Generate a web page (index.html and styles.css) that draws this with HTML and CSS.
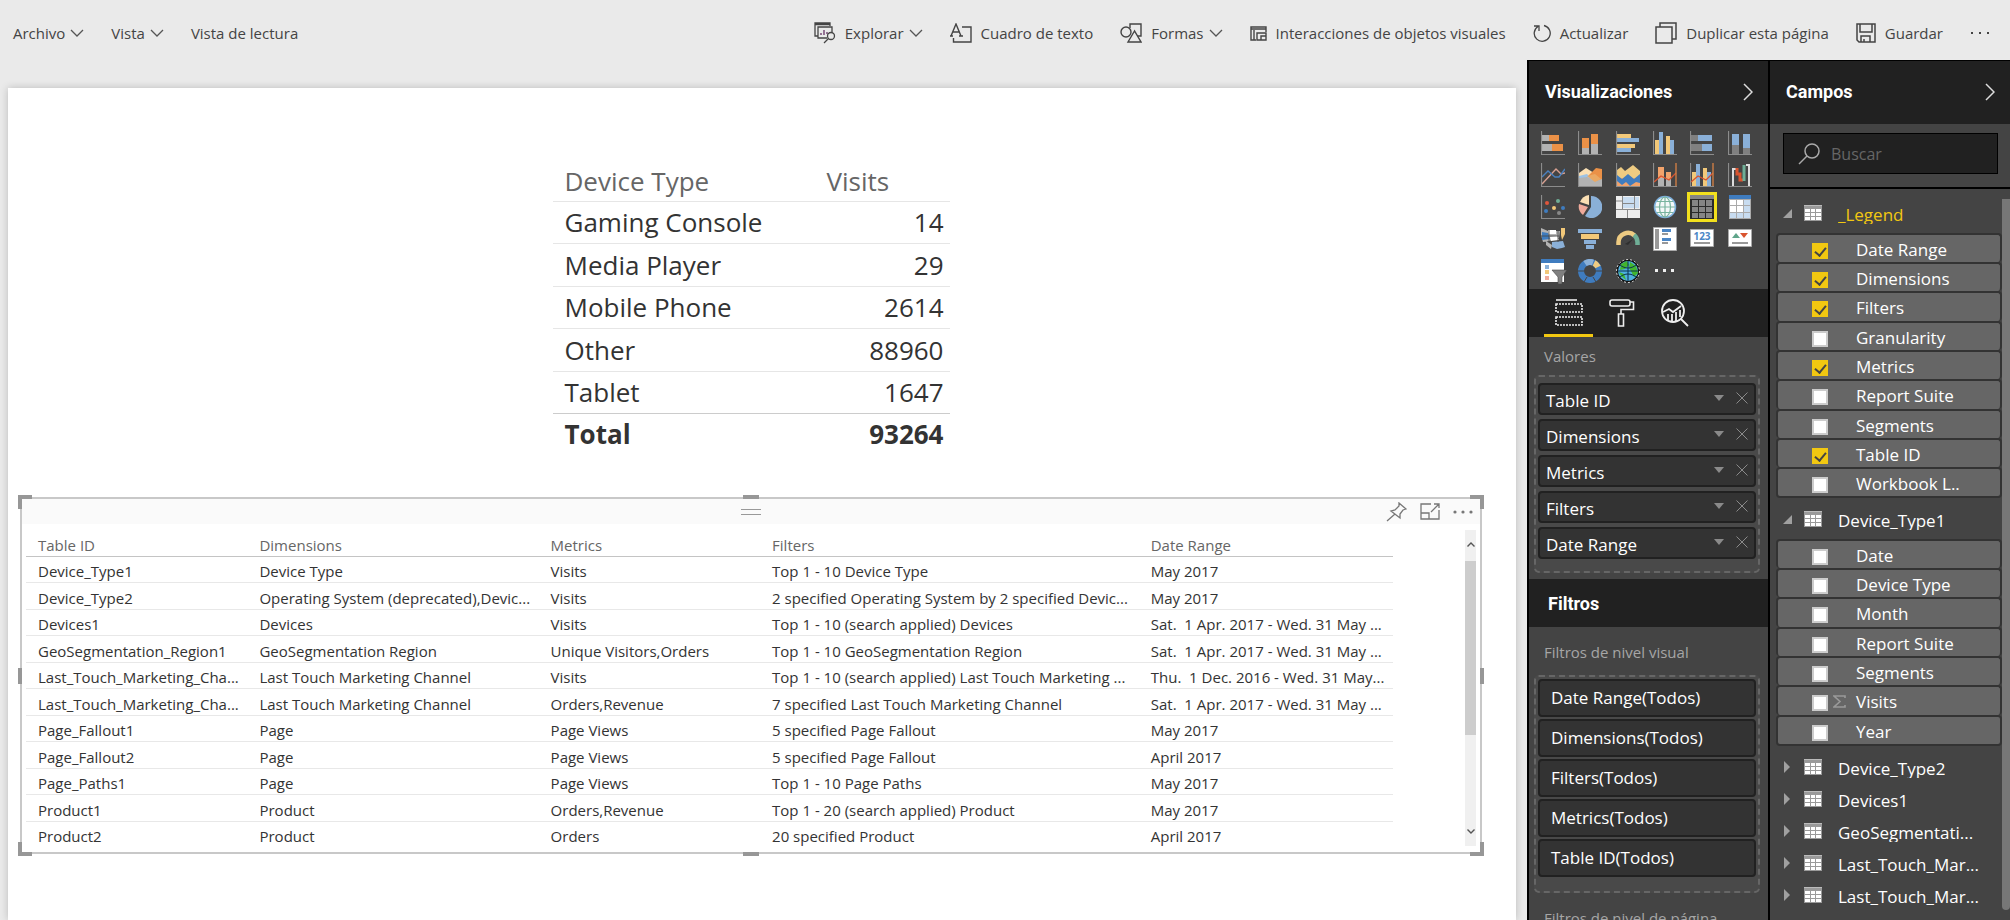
FILE: index.html
```html
<!DOCTYPE html>
<html lang="es">
<head>
<meta charset="utf-8">
<title>Informe</title>
<link rel="stylesheet" href="styles.css">
</head>
<body>
<svg class="defs" aria-hidden="true">
  <symbol id="chev" viewBox="0 0 14 8"><path d="M1 1l6 6 6-6" fill="none" stroke="#555" stroke-width="1.3"/></symbol>
  <symbol id="chevr" viewBox="0 0 10 18"><path d="M1 1l8 8-8 8" fill="none" stroke="#ddd" stroke-width="1.5"/></symbol>
  <symbol id="tri" viewBox="0 0 10 6"><path d="M0 0h10L5 6z" fill="#8a8a8a"/></symbol>
  <symbol id="x" viewBox="0 0 12 12"><path d="M.5.5l11 11M11.500.5l-11 11" stroke="#8a8a8a" stroke-width="1" fill="none"/></symbol>
  <symbol id="open" viewBox="0 0 9 9"><path d="M9 0v9H0z" fill="#a0a0a0"/></symbol>
  <symbol id="closed" viewBox="0 0 9 12"><path d="M1 0l6 6-6 6z" fill="#a0a0a0"/></symbol>
  <symbol id="tbl" viewBox="0 0 18 16"><path fill="#9a9a9a" d="M0 0h18v16H0z"/><path fill="#bbb" d="M0 0h18v1H0z"/><path fill="#fff" d="M1 4h5v3H1zM7 4h4v3H7zM12 4h5v3h-5zM1 8h5v3H1zM7 8h4v3H7zM12 8h5v3h-5zM1 12h5v3H1zM7 12h4v3H7zM12 12h5v3h-5z"/></symbol>
  <symbol id="axis" viewBox="0 0 24 24"><path d="M.5 0v23.500H24" fill="none" stroke="#8c8c8c" stroke-width="1.200"/></symbol>
</svg>

<header class="toolbar">
  <nav class="group left">
    <button>Archivo <svg class="chev"><use href="#chev"/></svg></button>
    <button>Vista <svg class="chev"><use href="#chev"/></svg></button>
    <button>Vista de lectura</button>
  </nav>
  <div class="group right">
    <button><svg class="tool" width="22" height="22" viewBox="0 0 22 22" fill="none" stroke="#444" stroke-width="1.300"><path d="M4 14H1V1h15v3M1 2.500h15M13 16H4V5h14v5"/><path d="M7 13v-2M10 13V8M13 12v-2" stroke="#636"/><circle cx="17" cy="14" r="3.500"/><path d="M14.500 16.500L10 21"/></svg>Explorar <svg class="chev"><use href="#chev"/></svg></button>
    <button><svg class="tool" width="22" height="20" viewBox="0 0 22 20" fill="none" stroke="#444" stroke-width="1.400"><path d="M3.500 15v4H21V4h-9"/><path d="M1 13L6 1l5 12M3 9h6M0 13h3M9 13h4"/></svg>Cuadro de texto</button>
    <button><svg class="tool" width="22" height="20" viewBox="0 0 22 20" fill="none" stroke="#444" stroke-width="1.400"><circle cx="6" cy="9" r="5"/><path d="M10 5V1h11v12h-4"/><path d="M14.500 8L8 19h13z" fill="#eaeaea"/></svg>Formas <svg class="chev"><use href="#chev"/></svg></button>
    <button><svg class="tool" width="17" height="15" viewBox="0 0 17 15" fill="none" stroke="#444" stroke-width="1.400"><path d="M16 6V1H1v13h5M1 3h15M4 4v10M7 14V7h9v7zM11 14v-4h5"/></svg>Interacciones de objetos visuales</button>
    <button><svg class="tool" width="18" height="18" viewBox="0 0 18 18" fill="none" stroke="#444" stroke-width="1.300"><path d="M11 1.500a8 8 0 1 1-6 1M1 2h5v5"/></svg>Actualizar</button>
    <button><svg class="tool" width="22" height="22" viewBox="0 0 22 22" fill="none" stroke="#444" stroke-width="1.500"><path d="M1 5h16v16H1zM5 5V1h16v16h-4"/></svg>Duplicar esta página</button>
    <button><svg class="tool" width="20" height="20" viewBox="0 0 20 20" fill="none" stroke="#444" stroke-width="1.500"><path d="M1 1h18v18H3l-2-2zM4 1v8h12V1M5 19v-6h9v6M8 19v-3"/></svg>Guardar</button>
    <button aria-label="Más opciones"><svg width="20" height="4" viewBox="0 0 20 4" fill="#444"><path d="M1 1h2v2H1zM9 1h2v2H9zM17 1h2v2h-2z"/></svg></button>
  </div>
</header>

<div class="workspace">
  <main class="canvas">
    <table class="summary">
      <thead><tr><th>Device Type</th><th>Visits</th></tr></thead>
      <tbody>
        <tr><td>Gaming Console</td><td>14</td></tr>
        <tr><td>Media Player</td><td>29</td></tr>
        <tr><td>Mobile Phone</td><td>2614</td></tr>
        <tr><td>Other</td><td>88960</td></tr>
        <tr><td>Tablet</td><td>1647</td></tr>
      </tbody>
      <tfoot><tr><td>Total</td><td>93264</td></tr></tfoot>
    </table>

    <section class="visual">
      <i class="h tl"></i><i class="h tc"></i><i class="h tr"></i><i class="h ml"></i><i class="h mr"></i><i class="h bl"></i><i class="h bc"></i><i class="h br"></i>
      <div class="bar">
        <span class="grip"></span>
        <div class="actions">
          <button aria-label="Anclar"><svg width="21" height="20" viewBox="0 0 21 20" fill="none" stroke="#777" stroke-width="1.300"><path d="M13 1l7 6-3 1-3 4v4L5 9l4-1 4-4zM9 12l-8 7"/></svg></button>
          <button aria-label="Modo de enfoque"><svg width="20" height="17" viewBox="0 0 20 17" fill="none" stroke="#777" stroke-width="1.300"><path d="M11 1H1v15h18V7M1 10h8v6M11 9l8-8M14 1h5v4"/></svg></button>
          <button aria-label="Más opciones"><svg width="20" height="4" viewBox="0 0 20 4" fill="#777"><circle cx="2" cy="2" r="1.600"/><circle cx="10" cy="2" r="1.600"/><circle cx="18" cy="2" r="1.600"/></svg></button>
        </div>
      </div>
      <div class="grid-wrap">
        <table class="detail">
          <colgroup><col class="c1"><col class="c2"><col class="c3"><col class="c4"><col class="c5"></colgroup>
          <thead><tr><th>Table ID</th><th>Dimensions</th><th>Metrics</th><th>Filters</th><th>Date Range</th></tr></thead>
          <tbody>
            <tr><td>Device_Type1</td><td>Device Type</td><td>Visits</td><td>Top 1 - 10 Device Type</td><td>May 2017</td></tr>
            <tr><td>Device_Type2</td><td>Operating System (deprecated),Devic...</td><td>Visits</td><td>2 specified Operating System by 2 specified Devic...</td><td>May 2017</td></tr>
            <tr><td>Devices1</td><td>Devices</td><td>Visits</td><td>Top 1 - 10 (search applied) Devices</td><td>Sat.  1 Apr. 2017 - Wed. 31 May ...</td></tr>
            <tr><td>GeoSegmentation_Region1</td><td>GeoSegmentation Region</td><td>Unique Visitors,Orders</td><td>Top 1 - 10 GeoSegmentation Region</td><td>Sat.  1 Apr. 2017 - Wed. 31 May ...</td></tr>
            <tr><td>Last_Touch_Marketing_Cha...</td><td>Last Touch Marketing Channel</td><td>Visits</td><td>Top 1 - 10 (search applied) Last Touch Marketing ...</td><td>Thu.  1 Dec. 2016 - Wed. 31 May...</td></tr>
            <tr><td>Last_Touch_Marketing_Cha...</td><td>Last Touch Marketing Channel</td><td>Orders,Revenue</td><td>7 specified Last Touch Marketing Channel</td><td>Sat.  1 Apr. 2017 - Wed. 31 May ...</td></tr>
            <tr><td>Page_Fallout1</td><td>Page</td><td>Page Views</td><td>5 specified Page Fallout</td><td>May 2017</td></tr>
            <tr><td>Page_Fallout2</td><td>Page</td><td>Page Views</td><td>5 specified Page Fallout</td><td>April 2017</td></tr>
            <tr><td>Page_Paths1</td><td>Page</td><td>Page Views</td><td>Top 1 - 10 Page Paths</td><td>May 2017</td></tr>
            <tr><td>Product1</td><td>Product</td><td>Orders,Revenue</td><td>Top 1 - 20 (search applied) Product</td><td>May 2017</td></tr>
            <tr><td>Product2</td><td>Product</td><td>Orders</td><td>20 specified Product</td><td>April 2017</td></tr>
          </tbody>
        </table>
        <div class="scroll">
          <svg width="8" height="5" viewBox="0 0 8 5"><path d="M.5 4.500L4 1l3.500 3.500" fill="none" stroke="#555" stroke-width="1.400"/></svg>
          <span class="thumb"></span>
          <svg width="8" height="5" viewBox="0 0 8 5"><path d="M.5.5L4 4 7.500.5" fill="none" stroke="#555" stroke-width="1.400"/></svg>
        </div>
      </div>
    </section>
  </main>

  <aside class="pane viz">
    <div class="pane-head"><h2>Visualizaciones</h2><button aria-label="Contraer"><svg width="10" height="18"><use href="#chevr"/></svg></button></div>
    <div class="gallery">
      <button aria-label="Barras apiladas"><svg viewBox="0 0 24 24"><path fill="#b3b3b3" d="M1 4h7v6H1zM1 13h10v7H1z"/><path fill="#eb9147" d="M8 4h10v6H8zM11 13h11v7H11z"/><use href="#axis"/></svg></button>
      <button aria-label="Columnas apiladas"><svg viewBox="0 0 24 24"><path fill="#eb9147" d="M4 7h7v10H4zM13 3h7v10h-7z"/><path fill="#b3b3b3" d="M4 17h7v6H4zM13 13h7v10h-7z"/><use href="#axis"/></svg></button>
      <button aria-label="Barras agrupadas"><svg viewBox="0 0 24 24"><path fill="#f2c879" d="M1 3h14v4H1zM1 13h18v4H1z"/><path fill="#8ab0d8" d="M1 7h22v4H1zM1 17h14v4H1z"/><use href="#axis"/></svg></button>
      <button aria-label="Columnas agrupadas"><svg viewBox="0 0 24 24"><path fill="#f2c879" d="M2 9h4v14H2zM13 5h4v18h-4z"/><path fill="#8ab0d8" d="M6 1h4v22H6zM17 9h4v14h-4z"/><use href="#axis"/></svg></button>
      <button aria-label="Barras 100 %"><svg viewBox="0 0 24 24"><path fill="#808080" d="M1 4h7v6H1zM1 13h11v7H1z"/><path fill="#8ab0d8" d="M8 4h14v6H8zM12 13h10v7H12z"/><use href="#axis"/></svg></button>
      <button aria-label="Columnas 100 %"><svg viewBox="0 0 24 24"><path fill="#8ab0d8" d="M4 3h7v11H4zM15 3h7v14h-7z"/><path fill="#808080" d="M4 14h7v9H4zM15 17h7v6h-7z"/><use href="#axis"/></svg></button>

      <button aria-label="Líneas"><svg viewBox="0 0 24 24" fill="none" stroke-width="1.400"><path stroke="#d8a091" d="M1 21L15 6l5 5 4-1"/><path stroke="#4a80bf" d="M1 14l6-6 7 6 4 0 6-8"/><use href="#axis"/></svg></button>
      <button aria-label="Áreas"><svg viewBox="0 0 24 24"><path fill="#fbe0b4" d="M1 10l7-5 8 5v6H1z"/><path fill="#eb9147" d="M9 14l9-9 6 1v14h-9z"/><path fill="#9dc3e6" d="M1 13l8-2 8 8H1z"/><path fill="#b3b3b3" d="M1 15l8-1 8 4 7-2v7H1z"/><path fill="#eba963" d="M9 13l8-2 6 5-6 3z"/><use href="#axis"/></svg></button>
      <button aria-label="Áreas apiladas"><svg viewBox="0 0 24 24"><path fill="#f2a36b" d="M1 10h23v13H1z"/><path fill="#eecb82" d="M1 7l4-3 4 4 8-6 7 6v7H1z"/><path fill="#3f7cbf" d="M1 12l5 4 6-5 6 5 6-5v9l-4-1-6 4-4-4-4 3-5-4z"/><use href="#axis"/></svg></button>
      <button aria-label="Líneas y columnas apiladas"><svg viewBox="0 0 24 24"><path fill="#f2a36b" d="M5 4h6v11H5zM13 9h5v7h-5z"/><path fill="#b3b3b3" d="M5 15h6v8H5zM13 16h5v7h-5z"/><path fill="none" stroke="#d9542f" stroke-width="1.300" d="M1 19l7-6 8 4 7-7"/><path d="M23 0v23" stroke="#d98245" stroke-width="1.300"/><use href="#axis"/></svg></button>
      <button aria-label="Líneas y columnas agrupadas"><svg viewBox="0 0 24 24"><path fill="#f2c879" d="M2 9h4v14H2zM13 5h4v18h-4z"/><path fill="#8ab0d8" d="M6 1h4v22H6zM17 9h4v14h-4z"/><path fill="none" stroke="#d9542f" stroke-width="1.300" d="M1 19l7-6 8 4 7-7"/><path d="M23 0v23" stroke="#d98245" stroke-width="1.300"/><use href="#axis"/></svg></button>
      <button aria-label="Cascada"><svg viewBox="0 0 24 24" fill="none" stroke-width="2"><path stroke="#ddd" d="M5 23V6h4M21 23V2h-3"/><path stroke="#d9542f" stroke-width="3" d="M9 5v6h3v6h3"/><path stroke="#6fae96" stroke-width="3" d="M16 18V2"/><use href="#axis"/></svg></button>

      <button aria-label="Dispersión"><svg viewBox="0 0 24 24"><circle cx="6" cy="8" r="2" fill="#e0563c"/><circle cx="17" cy="6" r="2" fill="#6fae96"/><circle cx="5" cy="16" r="2" fill="#3f7cbf"/><circle cx="13" cy="13" r="2" fill="#f2c879"/><circle cx="22" cy="13" r="2" fill="#3f7cbf"/><circle cx="18" cy="18" r="2" fill="#888"/><use href="#axis"/></svg></button>
      <button aria-label="Circular"><svg viewBox="0 0 24 24"><path fill="#8ab0d8" d="M13 1a11 11 0 1 1-6 20l6-9z"/><path fill="#fbe0b4" d="M11 0v10L2 7a11 11 0 0 1 9-7z"/><path fill="#f0aa9b" d="M1 9l9 3-5 8A11 11 0 0 1 1 9z"/></svg></button>
      <button aria-label="Treemap"><svg viewBox="0 0 24 24"><path fill="#eee" d="M0 1h24v22H0z"/><path fill="#c8dcf0" d="M7 2h11v6H7zM19 2h4v11h-4zM7 9h11v4H7z"/><path d="M6.500 1v13M0 14.500h24M11.500 14.500V23M18.500 1v13M7 8.500h11M0 6h6" stroke="#888" fill="none"/></svg></button>
      <button aria-label="Mapa"><svg viewBox="0 0 24 24" fill="none"><circle cx="12" cy="12" r="10.500" fill="#f4f8f8" stroke="#7db0dc" stroke-width="1.500"/><g stroke="#78b39e" stroke-width="1.200"><ellipse cx="12" cy="12" rx="5.500" ry="10"/><path d="M12 2v20M2 12h20M4 6.500h16M4 17.500h16"/></g></svg></button>
      <button class="selected" aria-label="Tabla"><svg viewBox="0 0 24 24"><path fill="#2a2a2a" d="M0 0h24v24H0z"/><path fill="#858585" d="M0 0h24v4H0zM2 5h6v6H2zM9 5h6v6H9zM16 5h6v6h-6zM2 12h6v5H2zM9 12h6v5H9zM16 12h6v5h-6zM2 18h6v5H2zM9 18h6v5H9zM16 18h6v5h-6z"/></svg></button>
      <button aria-label="Matriz"><svg viewBox="0 0 24 24"><path fill="#aaa" d="M1 0h22v24H1z"/><path fill="#3f7cbf" d="M1 0h22v4H1z"/><path fill="#fff" d="M2 5h6v5H2zM9 5h6v5H9zM2 11h6v6H2zM9 11h6v6H9z"/><path fill="#c8dcf0" d="M16 5h6v5h-6zM16 11h6v6h-6zM2 18h6v5H2zM9 18h6v5H9zM16 18h6v5h-6z"/></svg></button>

      <button aria-label="Mapa coroplético"><svg viewBox="0 0 24 24"><path fill="#b3b3b3" d="M0 1l7 3h12l-1 7-10 3-6 1L0 8zM5 14l6 4-1 4-5-4z"/><path fill="#3f7cbf" d="M1 5l6 1 2 6-8 1z"/><path fill="#fff" d="M7 3h8v4H8zM9 10l7-1 2 4-8 1z"/><path fill="#f2c879" d="M20 1l4 0v6l-3 6-1-5z"/><path fill="#8ab0d8" d="M11 15l11-1 2 6-3 1-5 1-5-2z"/><path d="M0 9h18M8 2v12M17 3v12" stroke="#444" stroke-width=".8"/></svg></button>
      <button aria-label="Embudo"><svg viewBox="0 0 24 24"><path fill="#8ab0d8" d="M0 2h24v4H0zM6 13h12v4H6zM8 18h8v4H8z"/><path fill="#f2c879" d="M3 7h18v5H3z"/></svg></button>
      <button aria-label="Medidor"><svg viewBox="0 0 24 24" fill="none"><path d="M2.500 18v-3a9.500 9.500 0 0 1 16-6.500" stroke="#eecb82" stroke-width="4.500"/><path d="M18 8a9.500 9.500 0 0 1 3.500 7v3" stroke="#6fae96" stroke-width="4.500"/><path fill="#2f2f2f" d="M9 17l8-5-5 6z"/></svg></button>
      <button aria-label="Tarjeta de varias filas"><svg viewBox="0 0 24 24"><path fill="#fff" stroke="#aaa" d="M.5.5h23v23H.5z"/><path fill="#999" d="M2 2h4v20H2z"/><path fill="#4a86c6" d="M9 2h9v3H9zM9 11h9v3H9z"/><path fill="#999" d="M9 6h6v2H9zM9 15h6v2H9z"/></svg></button>
      <button aria-label="Tarjeta"><svg viewBox="0 0 24 24"><path fill="#fff" stroke="#aaa" d="M.5 2.500h23v17H.5z"/><text x="12" y="13" text-anchor="middle" class="num">123</text><path fill="#999" d="M4 15h16v2H4z"/></svg></button>
      <button aria-label="KPI"><svg viewBox="0 0 24 24"><path fill="#fff" stroke="#aaa" d="M.5 2.500h23v17H.5z"/><path fill="#5fa58a" d="M4 11l4-5 4 5z"/><path fill="#d9542f" d="M12 6h8l-4 5z"/><path fill="#999" d="M4 15h16v2H4z"/></svg></button>

      <button aria-label="Segmentación"><svg class="tall" viewBox="0 0 26 25"><path fill="#fff" d="M0 0h23v23H0z"/><path fill="#3f7cbf" d="M0 0h23v4H0z"/><path fill="#8ab0d8" d="M4 6h4v4H4z"/><path fill="#f2c879" d="M4 11h4v4H4z"/><path fill="#f0aa9b" d="M4 17h4v4H4z"/><path fill="#808080" stroke="#444" stroke-width=".6" d="M11 11h15l-5 7v7h-4v-7z"/></svg></button>
      <button aria-label="Anillos"><svg viewBox="0 0 24 24" fill="none" stroke-width="6"><circle cx="12" cy="12" r="9" stroke="#3f7cbf"/><path d="M7 4.500A9 9 0 0 1 15 3.500" stroke="#8ab0d8"/><path d="M16 4a9 9 0 0 1 4 4" stroke="#eecb82"/><path d="M0 12h6M18 12h6M6 23l3-5M18 23l-3-5" stroke="#444" stroke-width="1"/></svg></button>
      <button aria-label="Mapa ArcGIS"><svg viewBox="0 0 24 24"><circle cx="12" cy="12" r="11.500" fill="#111" stroke="#ddd" stroke-dasharray="2 2"/><circle cx="12" cy="12" r="10" fill="#4fb0e0"/><path fill="#42b52f" d="M5 5l6-3 2 4-4 4-5 1zM14 3l6 4 2 7-4 4-3-6-2-3zM3 13l5 2 2 6-5-4z"/><path d="M12 2v20M2 12h20M4 6c5 4 11 4 16 0M4 18c5-4 11-4 16 0" fill="none" stroke="#0a3550" stroke-width="1"/></svg></button>
      <button aria-label="Más"><svg viewBox="0 0 24 24" fill="#eee"><path d="M2 10h3v3H2zM10 10h3v3h-3zM18 10h3v3h-3z"/></svg></button>
    </div>
    <div class="tabs">
      <button class="active" aria-label="Campos"><svg width="28" height="28" viewBox="0 0 28 28" fill="none" stroke="#eee" stroke-width="1.600"><path d="M1 1h21"/><path stroke-dasharray="2 1" d="M1 5h26v8H1zM1 18h26v8H1z"/></svg></button>
      <button aria-label="Formato"><svg width="28" height="28" viewBox="0 0 28 28" fill="none" stroke="#eee" stroke-width="1.600"><rect x="2" y="1" width="20" height="6" rx="2"/><path d="M22 3h3.500v7.500H13V15M10.500 15h5v12h-5z"/></svg></button>
      <button aria-label="Análisis"><svg width="28" height="28" viewBox="0 0 28 28" fill="none" stroke="#eee" stroke-width="1.800"><circle cx="12" cy="12" r="11"/><path d="M2 13l6-3 4 3 8-6M20 20l7 7M7 15v6M11 15v7M15 13v9M19 11v7"/></svg></button>
    </div>
    <p class="caption">Valores</p>
    <ul class="well values">
      <li>Table ID<button aria-label="Opciones"><svg width="10" height="6"><use href="#tri"/></svg></button><button aria-label="Quitar"><svg width="12" height="12"><use href="#x"/></svg></button></li>
      <li>Dimensions<button aria-label="Opciones"><svg width="10" height="6"><use href="#tri"/></svg></button><button aria-label="Quitar"><svg width="12" height="12"><use href="#x"/></svg></button></li>
      <li>Metrics<button aria-label="Opciones"><svg width="10" height="6"><use href="#tri"/></svg></button><button aria-label="Quitar"><svg width="12" height="12"><use href="#x"/></svg></button></li>
      <li>Filters<button aria-label="Opciones"><svg width="10" height="6"><use href="#tri"/></svg></button><button aria-label="Quitar"><svg width="12" height="12"><use href="#x"/></svg></button></li>
      <li>Date Range<button aria-label="Opciones"><svg width="10" height="6"><use href="#tri"/></svg></button><button aria-label="Quitar"><svg width="12" height="12"><use href="#x"/></svg></button></li>
    </ul>
    <h2 class="section">Filtros</h2>
    <p class="caption level">Filtros de nivel visual</p>
    <ul class="well filters">
      <li>Date Range<b>(Todos)</b></li>
      <li>Dimensions<b>(Todos)</b></li>
      <li>Filters<b>(Todos)</b></li>
      <li>Metrics<b>(Todos)</b></li>
      <li>Table ID<b>(Todos)</b></li>
    </ul>
    <p class="caption level">Filtros de nivel de página</p>
  </aside>

  <aside class="pane fields">
    <div class="pane-head"><h2>Campos</h2><button aria-label="Contraer"><svg width="10" height="18"><use href="#chevr"/></svg></button></div>
    <div class="search-row">
      <label class="search"><svg width="22" height="22" viewBox="0 0 22 22" fill="none" stroke="#aaa" stroke-width="1.500"><circle cx="14" cy="8" r="7"/><path d="M9 13l-8 8"/></svg><input type="search" placeholder="Buscar" aria-label="Buscar"></label>
    </div>
    <div class="tree">
      <span class="tree-scroll"></span>
      <button class="node on"><svg class="arrow"><use href="#open"/></svg><svg class="ico"><use href="#tbl"/></svg><span>_Legend</span></button>
      <ul class="cols">
        <li><label><input type="checkbox" checked><span>Date Range</span></label></li>
        <li><label><input type="checkbox" checked><span>Dimensions</span></label></li>
        <li><label><input type="checkbox" checked><span>Filters</span></label></li>
        <li><label><input type="checkbox"><span>Granularity</span></label></li>
        <li><label><input type="checkbox" checked><span>Metrics</span></label></li>
        <li><label><input type="checkbox"><span>Report Suite</span></label></li>
        <li><label><input type="checkbox"><span>Segments</span></label></li>
        <li><label><input type="checkbox" checked><span>Table ID</span></label></li>
        <li><label><input type="checkbox"><span>Workbook L..</span></label></li>
      </ul>
      <button class="node"><svg class="arrow"><use href="#open"/></svg><svg class="ico"><use href="#tbl"/></svg><span>Device_Type1</span></button>
      <ul class="cols">
        <li><label><input type="checkbox"><span>Date</span></label></li>
        <li><label><input type="checkbox"><span>Device Type</span></label></li>
        <li><label><input type="checkbox"><span>Month</span></label></li>
        <li><label><input type="checkbox"><span>Report Suite</span></label></li>
        <li><label><input type="checkbox"><span>Segments</span></label></li>
        <li><label><input type="checkbox"><svg class="sigma" width="13" height="13" viewBox="0 0 13 13"><path d="M12 3V1H1l6 5.500L1 12h11v-2" fill="none" stroke="#999" stroke-width="1.600"/></svg><span>Visits</span></label></li>
        <li><label><input type="checkbox"><span>Year</span></label></li>
      </ul>
      <button class="node"><svg class="arrow c"><use href="#closed"/></svg><svg class="ico"><use href="#tbl"/></svg><span>Device_Type2</span></button>
      <button class="node"><svg class="arrow c"><use href="#closed"/></svg><svg class="ico"><use href="#tbl"/></svg><span>Devices1</span></button>
      <button class="node"><svg class="arrow c"><use href="#closed"/></svg><svg class="ico"><use href="#tbl"/></svg><span>GeoSegmentati...</span></button>
      <button class="node"><svg class="arrow c"><use href="#closed"/></svg><svg class="ico"><use href="#tbl"/></svg><span>Last_Touch_Mar...</span></button>
      <button class="node"><svg class="arrow c"><use href="#closed"/></svg><svg class="ico"><use href="#tbl"/></svg><span>Last_Touch_Mar...</span></button>
    </div>
  </aside>
</div>
</body>
</html>
```
FILE: styles.css
```css
* { box-sizing: border-box; }
html, body { height: 100%; }
body {
  margin: 0;
  display: flex;
  flex-direction: column;
  overflow: hidden;
  background: #eaeaea;
  color: #333;
  font-family: "Open Sans", "Noto Sans", sans-serif;
  font-size: 15px;
}
button {
  padding: 0;
  border: 0;
  background: none;
  color: inherit;
  font: inherit;
  cursor: pointer;
}
svg { display: block; flex: none; }
ul { margin: 0; padding: 0; list-style: none; }
h2, p { margin: 0; }
.defs { position: absolute; width: 0; height: 0; }

/* Toolbar */
.toolbar {
  flex: none;
  height: 60px;
  padding: 6px 20px 0 13px;
  display: flex;
  align-items: center;
  justify-content: space-between;
  color: #444;
}
.group { display: flex; align-items: center; gap: 27px; }
.toolbar button { display: flex; align-items: center; white-space: nowrap; }
.tool { margin-right: 9px; }
.chev { width: 14px; height: 8px; margin-left: 5px; }

.workspace { flex: 1; min-height: 0; display: flex; }

/* Report canvas */
.canvas {
  flex: 1;
  min-width: 0;
  margin: 28px 11px 0 8px;
  padding: 74px 34px 0 12px;
  display: flex;
  flex-direction: column;
  align-items: center;
  background: #fff;
  box-shadow: 0 0 8px rgba(0, 0, 0, .2);
}
table { border-collapse: collapse; table-layout: fixed; }
th { font-weight: 400; text-align: left; color: #666; }

.summary { width: 397px; font-size: 26px; line-height: 34px; }
.summary th, .summary td { height: 42px; padding: 0 6px 0 12px; border-bottom: 1px solid #e6e6e6; }
.summary tr:nth-child(even) td { height: 43px; }
.summary th { height: 39px; }
.summary th:first-child { width: 262px; }
.summary td + td { text-align: right; }
.summary tr:last-child td { border-bottom-color: #ccc; }
.summary tfoot td { font-weight: 700; }
.summary tfoot tr:last-child td { border-bottom: 0; }

.visual {
  position: relative;
  width: 100%;
  height: 357px;
  margin-top: 42px;
  border: 2px solid #c8c8c8;
}
.h { position: absolute; border: 0 solid #979797; width: 14px; height: 14px; }
.tl { left: -4px; top: -4px; border-width: 4px 0 0 4px; }
.tr { right: -4px; top: -4px; border-width: 4px 4px 0 0; }
.bl { left: -4px; bottom: -4px; border-width: 0 0 4px 4px; }
.br { right: -4px; bottom: -4px; border-width: 0 4px 4px 0; }
.tc, .bc { left: calc(50% - 8px); width: 16px; height: 4px; background: #979797; }
.tc { top: -4px; }
.bc { bottom: -4px; }
.ml, .mr { top: calc(50% - 8px); width: 4px; height: 16px; background: #979797; }
.ml { left: -4px; }
.mr { right: -4px; }
.bar {
  height: 25px;
  padding: 0 7px;
  display: grid;
  grid-template-columns: 1fr 20px 1fr;
  align-items: center;
  background: #fafafa;
}
.grip { grid-column: 2; height: 6px; border: 1px solid #999; border-width: 1px 0; }
.actions { display: flex; justify-content: flex-end; align-items: center; gap: 13px; }
.grid-wrap { display: flex; align-items: flex-start; justify-content: space-between; padding: 6px 4px 0; }
.detail { width: 1367px; max-width: calc(100% - 20px); line-height: 20px; }
.c1 { width: 16.2%; }
.c2 { width: 21.3%; }
.c3 { width: 16.2%; }
.c4 { width: 27.7%; }
.c5 { width: 18.6%; }
.detail th, .detail td {
  height: 26px;
  padding: 4px 0 0 12px;
  border-bottom: 1px solid #e8e8e8;
  white-space: pre;
  overflow: hidden;
}
.detail th { border-bottom-color: #c4c4c4; }
.detail tr:nth-child(even) td { height: 27px; }
.detail tr:last-child td { border: 0; }
.scroll {
  width: 11px;
  height: 316px;
  padding: 12px 0;
  display: flex;
  flex-direction: column;
  align-items: center;
  background: #f0f0f0;
}
.thumb { width: 100%; height: 174px; margin: 14px 0 auto; background: #cdcdcd; }

/* Side panes */
.pane {
  flex: none;
  width: 241px;
  background: #444;
  border-left: 2px solid #000;
  color: #fff;
  overflow: hidden;
}
.pane-head {
  height: 64px;
  padding: 0 15px 2px 16px;
  display: flex;
  align-items: center;
  justify-content: space-between;
  background: #212121;
  border-top: 1px solid #000;
}
h2 { font: 700 18px Roboto, sans-serif; }
.gallery {
  padding: 7px 3px 6px 12px;
  display: grid;
  grid-template-columns: repeat(6, 1fr);
  row-gap: 8px;
}
.gallery button { width: 24px; height: 24px; }
.gallery svg { width: 24px; height: 24px; }
.gallery .tall { width: 26px; height: 25px; }
.gallery .selected { outline: 3px solid #f2e01d; background: #1e1e1e; }
.num { font: 700 10px "Open Sans", sans-serif; fill: #4a86c6; }
.tabs { height: 48px; padding-left: 15px; display: flex; gap: 4px; background: #212121; }
.tabs button {
  width: 49px;
  padding-top: 10px;
  display: flex;
  justify-content: center;
  align-items: flex-start;
  border-bottom: 3px solid transparent;
}
.tabs .active { border-color: #f2c811; }
.caption { padding: 8px 15px; color: #a6a6a6; line-height: 22px; white-space: nowrap; }
.well {
  margin: 0 8px 0 5px;
  padding: 6px 2px 12px;
  border: 2px dashed #666;
  border-radius: 5px;
  background: #494949;
  font-size: 17px;
}
.well li {
  height: 32px;
  padding: 2px 6px 0;
  display: flex;
  align-items: center;
  border: 2px solid #212121;
  border-radius: 4px;
  background: #333;
}
.values li + li { margin-top: 4px; }
.values button { margin: 0 12px 4px auto; }
.values button + button { margin: 0 0 5px; }
.section { height: 48px; margin-top: 6px; padding-left: 19px; line-height: 50px; background: #212121; }
.level { padding-top: 14px; padding-bottom: 12px; }
.filters { padding: 2px 2px 14px; }
.filters li { height: 38px; padding: 0 11px 2px; }
.filters li + li { margin-top: 2px; }
.filters b { font-weight: 500; }

.fields { width: 242px; display: flex; flex-direction: column; }
.fields .pane-head { flex: none; }
.search-row { flex: none; padding: 9px 12px 13px 13px; border-bottom: 2px solid #000; }
.search {
  height: 41px;
  padding-left: 14px;
  display: flex;
  align-items: center;
  gap: 11px;
  background: #212121;
  border: 1px solid #000;
}
.search input {
  flex: 1;
  min-width: 0;
  border: 0;
  padding: 0;
  background: none;
  color: #fff;
  font: 16px "Open Sans", sans-serif;
}
.search input::placeholder { color: #666; opacity: 1; }
.tree { position: relative; flex: 1; padding: 8px 8px 0 6px; }
.tree-scroll { position: absolute; right: 0; top: 10px; bottom: 10px; width: 8px; background: #777; border-radius: 0 0 4px 4px; }
.node {
  width: 100%;
  height: 32px;
  padding-left: 7px;
  display: flex;
  align-items: center;
  font-size: 17px;
  text-align: left;
  white-space: nowrap;
}
.node span { height: 22px; line-height: 25px; overflow: hidden; }
.on { color: #f2c811; }
.arrow { width: 9px; height: 9px; margin-right: 12px; }
.arrow.c { height: 12px; }
.ico { width: 18px; height: 16px; margin-right: 16px; }
.cols { margin: 4px 0 5px; }
.cols li {
  height: 29px;
  border: 2px solid #333;
  border-bottom-width: 0;
  border-radius: 4px;
  background: #666;
}
.cols li:nth-child(3n) { height: 30px; }
.cols li:last-child { border-bottom-width: 2px; height: 31px; }
.cols label {
  height: 28px;
  padding-left: 34px;
  display: grid;
  grid-template-columns: 21px 23px 1fr;
  align-items: center;
  font-size: 17px;
  white-space: nowrap;
}
.cols label span { grid-column: 3; }
.cols input {
  appearance: none;
  width: 16px;
  height: 16px;
  margin: 4px 0 0;
  border: 2px solid #ccc;
  background: #fff;
  display: grid;
  place-items: center;
}
.cols input:checked { background: #f2c811; border-color: #f2c811; }
.cols input:checked::before {
  content: "";
  width: 5px;
  height: 9px;
  margin-bottom: 3px;
  border: solid #444;
  border-width: 0 2px 2px 0;
  transform: rotate(40deg);
}
```
